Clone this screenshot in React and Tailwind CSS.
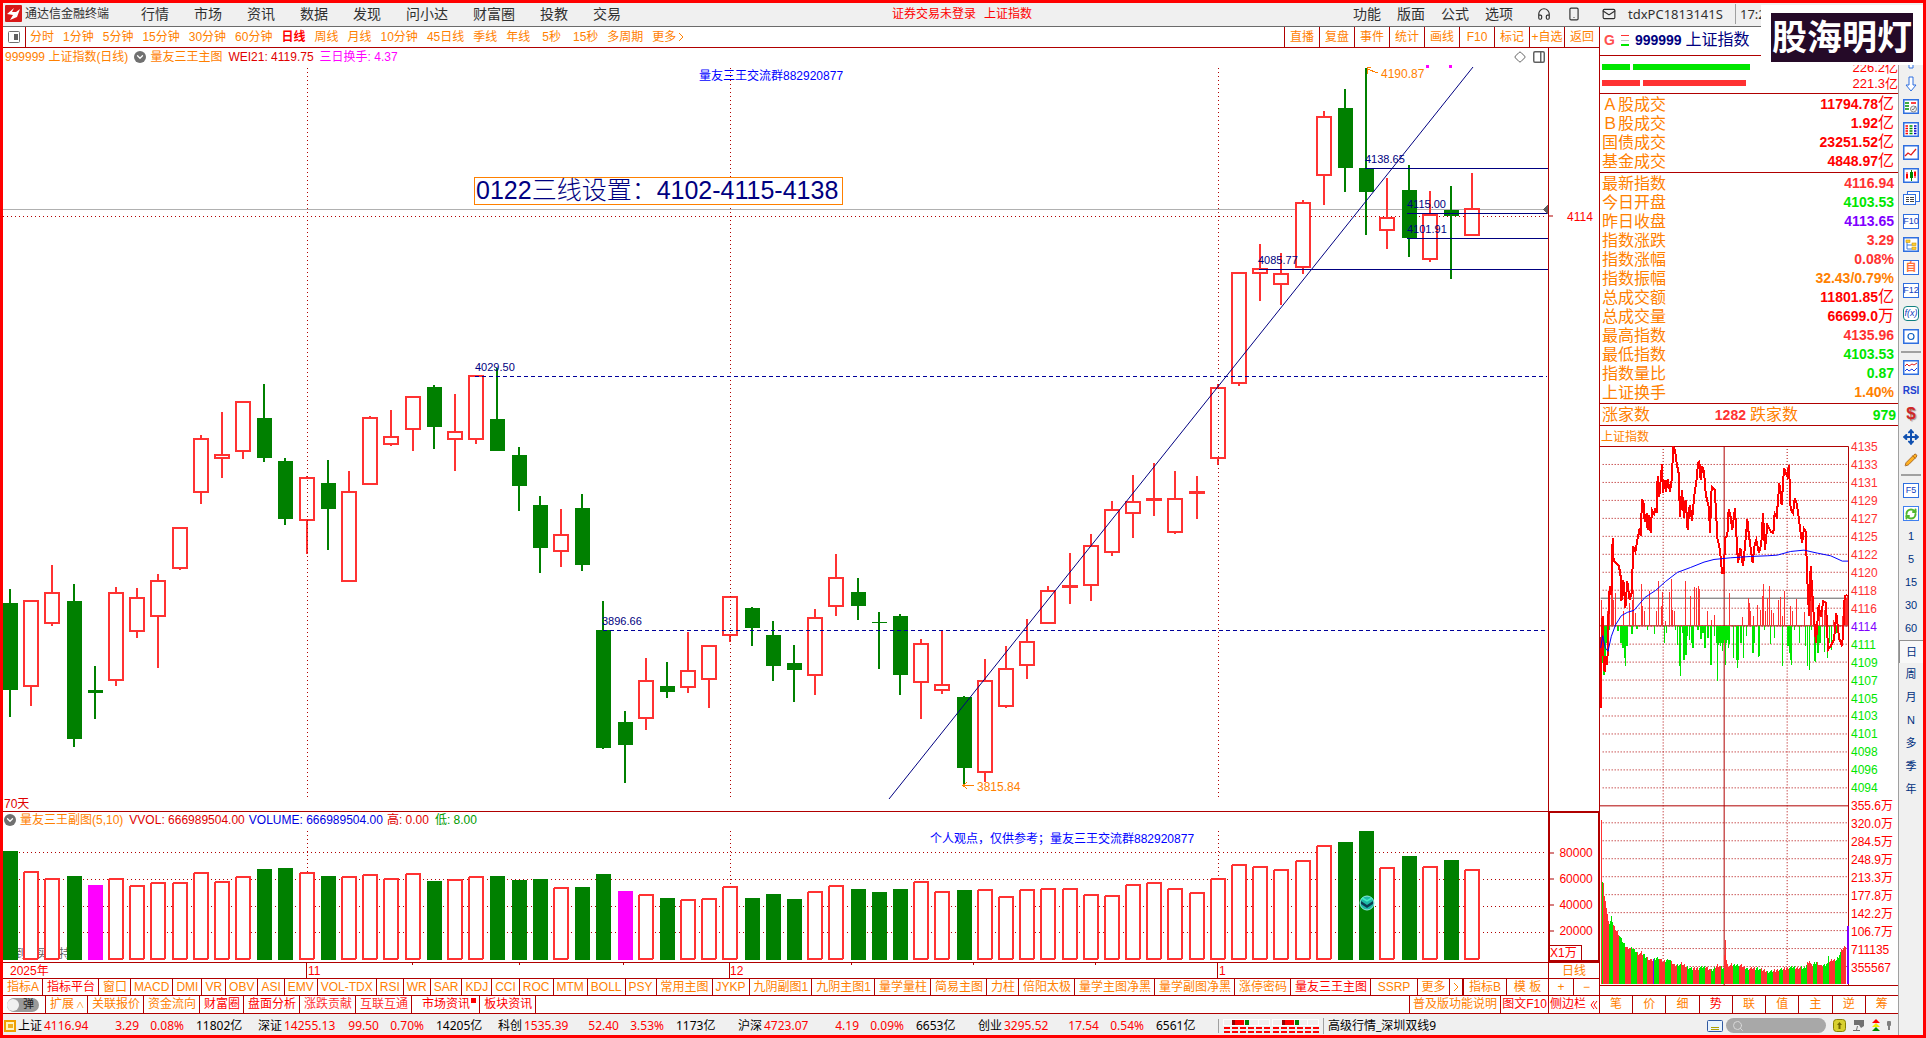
import React from "react";
import { Headphones, Smartphone, Mail, Search, Diamond, PanelRight, ChevronDown, Pencil, Move, RefreshCw } from "lucide-react";

/* kind, body top, body bottom, wick top, wick bottom, volume top, volume kind */
const DAYS = [
  ["g",603,690,589,717,851],["r",600,687,600,706,871],["r",592,624,565,626,878],["g",601,739,584,747,876],["g",690,693,666,719,885,"m"],
  ["r",592,681,587,686,878],["r",597,632,588,638,885],["r",580,617,574,668,882],["r",527,569,527,570,882],["r",438,493,435,504,872],
  ["r",454,459,412,478,881],["r",401,452,401,459,876],["g",418,458,384,462,869],["g",461,519,458,525,868],["r",477,521,476,554,872],
  ["g",483,509,460,550,876],["r",491,582,471,582,876],["r",417,485,416,485,874],["r",436,445,410,446,878],["r",396,430,396,451,873],
  ["g",387,427,385,449,881],["r",431,440,394,471,879],["r",375,440,375,444,876],["g",419,451,368,451,876],["g",455,486,447,511,880],
  ["g",505,548,496,573,879],["r",534,552,509,567,887],["g",508,565,494,571,887],["g",630,748,601,749,874],["g",722,745,711,783,891,"m"],
  ["r",680,719,658,730,894],["g",686,692,662,698,898],["r",670,688,632,693,899],["r",645,680,645,708,898],["r",596,636,596,642,886],
  ["g",608,628,607,646,898],["g",635,666,621,681,894],["g",663,670,645,702,899],["r",617,676,609,695,891],["r",577,607,554,616,885],
  ["g",592,606,578,620,889],["g",622,623,612,669,892],["g",616,675,614,695,889],["r",643,683,639,719,881],["r",684,691,630,694,891],
  ["g",697,768,696,785,890],["r",680,773,659,782,889],["r",668,707,646,708,896],["r",641,666,619,679,889],["r",590,624,586,624,888],
  ["r",585,588,553,604,888],["r",545,586,534,601,894],["r",509,553,501,556,895],["r",501,514,475,538,884],["r",498,501,463,516,882],
  ["r",498,533,471,534,888],["r",491,494,476,519,892],["r",387,459,384,465,878],["r",272,384,272,386,864],["r",268,274,244,301,866],
  ["r",273,285,253,305,869],["r",202,268,200,274,860],["r",116,176,111,205,845],["g",108,168,89,192,842],["g",168,192,68,235,831],
  ["r",217,231,178,249,867],["g",190,238,165,257,856],["r",214,260,191,262,866],["g",210,216,186,279,860],["r",208,236,173,236,869],
];
const cx = (i) => Math.round(10 + 21.19 * i);

const DARK = "#b00000";
const RED = "#ff3232";
const GREEN = "#008000";
const NAVY = "#000080";

function Label({ x, y, box, className = "", children }) {
  const [bx, by, bw, bh] = box;
  return (
    <span
      className={"absolute -translate-y-1/2 whitespace-nowrap leading-none " + className}
      style={{ left: ((x - bx) / bw) * 100 + "%", top: ((y - by) / bh) * 100 + "%" }}
    >
      {children}
    </span>
  );
}

const MAIN = [3, 48, 1545, 763];
const SUB = [3, 812, 1545, 150];

function RoundArrow() {
  return (
    <span className="flex size-3 items-center justify-center rounded-full bg-[#707070]">
      <ChevronDown className="size-2.5 text-white" strokeWidth={3} />
    </span>
  );
}

function MainChart() {
  return (
    <div className="relative min-w-0 flex-1 border-r border-[#b00000]">
      <svg className="absolute inset-0 size-full" viewBox={MAIN.join(" ")} preserveAspectRatio="none" shapeRendering="crispEdges">
        <line x1="3" x2="1545" y1="209.5" y2="209.5" stroke="#b0b0b0" />
        <line x1="3" x2="1547" y1="216.5" y2="216.5" stroke={DARK} strokeDasharray="1 3" />
        {DAYS.map(([k, t, b, wt, wb], i) => {
          const c = cx(i);
          return k === "g" ? (
            <g key={i} fill={GREEN}>
              <rect x={c - 1} y={wt} width="2" height={wb - wt} />
              <rect x={Math.max(3, c - 7)} y={t} width={15} height={b - t} />
            </g>
          ) : (
            <g key={i} fill={RED}>
              <rect x={c - 1} y={wt} width="2" height={t - wt} />
              <rect x={c - 1} y={b} width="2" height={wb - b} />
              <rect x={c - 7} y={t + 1} width="14" height={Math.max(1, b - t - 2)} fill="white" stroke={RED} strokeWidth="2" />
            </g>
          );
        })}
        {[307, 730, 1218].map((x) => (
          <line key={x} x1={x + 0.5} x2={x + 0.5} y1="68" y2="798" stroke={DARK} strokeDasharray="1 3" />
        ))}
        <line x1="475" x2="1547" y1="376.5" y2="376.5" stroke="#00009a" strokeDasharray="4 3" />
        <line x1="603" x2="1547" y1="630.5" y2="630.5" stroke="#00009a" strokeDasharray="4 3" />
        <g stroke={NAVY}>
          <line x1="1365" x2="1548" y1="168.5" y2="168.5" />
          <line x1="1407" x2="1548" y1="213.5" y2="213.5" />
          <line x1="1407" x2="1548" y1="238.5" y2="238.5" />
          <line x1="1259" x2="1548" y1="269.5" y2="269.5" />
          <line x1="889" y1="799" x2="1473" y2="67" shapeRendering="auto" />
        </g>
        <g stroke="#ff8000" fill="none">
          <path d="M1367 69 L1378 73 M1371 67 L1367 68 L1368 74" />
          <path d="M963 785.5 H974 M967 782 L963 785.5 L967 789" />
        </g>
        <rect x="1426" y="65" width="3" height="3" fill="#ff00ff" />
        <rect x="1449" y="65" width="3" height="3" fill="#ff00ff" />
        <path d="M1548 205 L1543 209.5 L1548 214Z" fill="#606060" />
      </svg>
      <div className="absolute left-0.5 top-px flex h-4 items-center gap-1.5 text-xs leading-4 text-[#ff8000]">
        <span>999999 上证指数(日线)</span>
        <span className="flex items-center gap-1"><RoundArrow />量友三王主图</span>
        <span className="text-[#e00000]">WEI21: 4119.75</span>
        <span className="text-[#ff00ff]">三日换手: 4.37</span>
      </div>
      <div className="absolute right-0.5 top-px flex h-4 items-center gap-1.5 text-[#606060]">
        <Diamond className="size-3" strokeWidth={2} />
        <PanelRight className="size-3.5" strokeWidth={2.5} />
      </div>
      <Label box={MAIN} x={699} y={76} className="text-xs text-[#0000ff]">量友三王交流群882920877</Label>
      <Label box={MAIN} x={474} y={191} className="border border-[#ff8000] bg-white pb-px pl-px pr-1 text-[25px] leading-[26px] text-[#000080]">
        0122<span className="font-light">三线设置：</span>4102-4115-4138
      </Label>
      <Label box={MAIN} x={1381} y={74} className="text-xs text-[#ff8000]">4190.87</Label>
      <Label box={MAIN} x={977} y={787} className="text-xs text-[#ff8000]">3815.84</Label>
      {[["4138.65",1365,159],["4115.00",1407,204],["4101.91",1407,229],["4085.77",1258,260],["4029.50",475,367],["3896.66",602,621]].map(([t, x, y]) => (
        <Label key={t} box={MAIN} x={x} y={y} className="text-[11px] text-[#000080]">{t}</Label>
      ))}
      <Label box={MAIN} x={4} y={804} className="text-xs text-[#e00000]">70天</Label>
    </div>
  );
}

function VolumeChart() {
  return (
    <div className="relative min-w-0 flex-1">
      <svg className="absolute inset-0 size-full" viewBox={SUB.join(" ")} preserveAspectRatio="none" shapeRendering="crispEdges">
        {[852, 879, 906, 932].map((y) => (
          <line key={y} x1="3" x2="1546" y1={y + 0.5} y2={y + 0.5} stroke={DARK} strokeDasharray="1 3" />
        ))}
        {[307, 730, 1218].map((x) => (
          <line key={x} x1={x + 0.5} x2={x + 0.5} y1="831" y2="960" stroke={DARK} strokeDasharray="1 3" />
        ))}
        <g fill="#606060" fontSize="12" shapeRendering="auto">
          <text x="14" y="958">到</text>
          <text x="36" y="958">买</text>
          <text x="59" y="958">持</text>
        </g>
        {DAYS.map(([k, , , , , v, vk], i) => {
          const c = cx(i);
          return k === "g" ? (
            <rect key={i} x={Math.max(3, c - 7)} y={v} width="15" height={960 - v} fill={vk ? "#ff00ff" : GREEN} />
          ) : (
            <rect key={i} x={c - 7} y={v + 1} width="14" height={958 - v} rx="1" fill="white" stroke={RED} strokeWidth="2" />
          );
        })}
        <g shapeRendering="auto">
          <circle cx="1367" cy="903" r="7" fill="#1fb9a8" stroke="#8ee8e0" />
          <path d="M1362 898 L1367 901 L1372 898" fill="none" stroke="#40f0c0" strokeWidth="1.5" />
          <path d="M1361 901 L1367 905 L1373 901 V904 L1367 908 L1361 904Z" fill="#0a3c50" />
        </g>
      </svg>
      <div className="absolute left-px top-0 flex h-4 items-center gap-1 text-xs leading-4">
        <RoundArrow />
        <span className="text-[#ff8000]">量友三王副图(5,10)</span>
        <span className="pl-0.5 text-[#e00000]">VVOL: 666989504.00</span>
        <span className="text-[#0000e0]">VOLUME: 666989504.00</span>
        <span className="text-[#e00000]">高: 0.00</span>
        <span className="pl-0.5 text-[#009a00]">低: 8.00</span>
      </div>
      <Label box={SUB} x={930} y={839} className="text-xs text-[#0000ff]">个人观点，仅供参考；量友三王交流群882920877</Label>
    </div>
  );
}

function VolumeAxis() {
  const box = [1548, 811, 51, 151];
  return (
    <div className="relative w-[51px] border-2 border-r border-[#b00000] text-xs text-[#ff0000]">
      {[852, 879, 906, 932].map((y, i) => (
        <React.Fragment key={y}>
          <Label box={box} x={1548} y={y} className="h-px w-1 bg-[#b00000]" />
          <Label box={box} x={1558} y={y}>{["80000", "60000", "40000", "20000"][i]}</Label>
        </React.Fragment>
      ))}
      <span className="absolute bottom-0 left-0 h-[15px] border-r border-t border-[#b00000] pr-1 leading-[14px]">X1万</span>
    </div>
  );
}

const PERIODS = ["分时","1分钟","5分钟","15分钟","30分钟","60分钟","日线","周线","月线","10分钟","45日线","季线","年线","5秒","15秒","多周期"];

function Toolbar() {
  return (
    <div className="flex h-[21px] shrink-0 items-stretch border-b border-[#b00000] text-xs leading-5 text-[#ff8000]">
      <button aria-label="布局" className="flex w-[23px] items-center justify-center border-r border-[#b00000] text-[#606060]">
        <svg width="12" height="12"><rect x=".5" y=".5" width="11" height="11" rx="1" fill="white" stroke="#707070" /><rect x="6" y="3" width="4" height="6" fill="#606060" /></svg>
      </button>
      <div className="flex items-center gap-[9px] pl-1 pr-2">
        {PERIODS.map((p) => (
          <button key={p} className={p === "日线" ? "font-bold text-[#ff0000]" : p.endsWith("秒") ? "pl-[3px]" : ""}>{p}</button>
        ))}
        <button className="flex items-center gap-0.5">
          更多
          <svg width="6" height="10" fill="none" stroke="currentColor"><path d="M1 1 L5 5 L1 9" /></svg>
        </button>
      </div>
      <div className="ml-auto flex">
        {["直播","复盘","事件","统计","画线","F10","标记","+自选","返回"].map((t) => (
          <button key={t} className="w-[35px] whitespace-nowrap border-l border-[#b00000] text-center">{t}</button>
        ))}
      </div>
    </div>
  );
}

const TABS1 = ["指标A","指标平台","窗口","MACD","DMI","VR","OBV","ASI","EMV","VOL-TDX","RSI","WR","SAR","KDJ","CCI","ROC","MTM","BOLL","PSY","常用主图","JYKP","九阴副图1","九阴主图1","量学量柱","简易主图","力柱","倍阳太极","量学主图净黑","量学副图净黑","涨停密码","量友三王主图","SSRP"];
const TABS2 = [["扩展"],["关联报价"],["资金流向"],["财富圈","e"],["盘面分析","e"],["涨跌贡献","l"],["互联互通","l"],["市场资讯","e"],["板块资讯","e"]];

function BottomTabs() {
  const cell = "whitespace-nowrap border-r border-[#b00000] ";
  return (
    <div className="shrink-0 text-xs leading-4 text-[#ff8000]">
      <div className="flex h-[17px] items-stretch border-t border-[#b00000]">
        <div className="flex min-w-0 flex-1 overflow-hidden">
          {TABS1.map((t) => (
            <button
              key={t}
              className={
                cell + "last:grow last:border-r-0 " + (/^[A-Z-]+$/.test(t) ? "px-[3px] " : "pl-1 pr-[3px] ") +
                (t === "指标平台" || t === "量友三王主图" ? "text-[#ff0000]" : "")
              }
            >
              {t}
            </button>
          ))}
        </div>
        <div className="flex">
          <button className="w-8 border-l border-[#b00000]">更多</button>
          <button aria-label="下一页" className="flex w-[15px] items-center justify-center border-l border-r-2 border-[#b00000]">
            <svg width="6" height="10" fill="none" stroke="currentColor"><path d="M1 1 L5 5 L1 9" /></svg>
          </button>
          <button className="w-[42px]">指标B</button>
          <button className="w-[42px] border-l border-[#b00000]">模 板</button>
          <button className="w-[25px] border-l border-[#b00000]">+</button>
          <button className="w-[26px] border-l border-[#b00000]">−</button>
        </div>
      </div>
      <div className="flex h-[19px] items-stretch border-y border-[#b00000] leading-[17px]">
        <label className="flex w-[43px] items-center border-r border-[#b00000] pl-1">
          <input type="checkbox" className="sr-only" aria-label="弹" />
          <span className="flex h-3.5 w-8 items-center rounded-full bg-[#9a9a9a]">
            <span className="size-3 rounded-full bg-[#f0f0f0]" />
            <span className="pl-1 text-[11px] text-[#202020]">弹</span>
          </span>
        </label>
        {TABS2.map(([t, c]) => (
          <button key={t} className={cell + "pl-1 pr-[3px] " + (c === "e" ? "text-[#ff0000]" : c === "l" ? "text-[#ff3232]" : "")}>
            {t === "扩展" ? (
              <span className="flex items-center">扩展<svg className="ml-0.5" width="8" height="8" fill="none" stroke="currentColor" opacity=".6"><path d="M1 7 L4 1 L7 7" /></svg></span>
            ) : t === "市场资讯" ? (
              <span className="relative inline-block px-1.5">{t}<i className="absolute right-0 top-0.5 size-[5px] bg-[#ff0000]" /></span>
            ) : t}
          </button>
        ))}
        <div className="ml-auto flex whitespace-nowrap">
          <button className="w-[91px] border-l border-[#b00000]">普及版功能说明</button>
          <button className="w-12 border-l border-[#b00000] text-[#ff0000]">图文F10</button>
          <button className="flex w-[51px] items-center gap-1 border-l border-[#b00000] pl-px text-[#ff0000]">
            侧边栏
            <svg width="8" height="10" fill="none" stroke="currentColor"><path d="M4 1 L1 5 L4 9 M7 1 L4 5 L7 9" /></svg>
          </button>
        </div>
      </div>
    </div>
  );
}

function DateAxis() {
  const box = [3, 962, 1545, 16];
  return (
    <div className="flex h-4 shrink-0 border-t border-[#b00000] text-xs text-[#ff0000]">
      <div className="relative flex-1">
        {[306, 729, 1217].map((x) => <Label key={x} box={box} x={x} y={970} className="h-4 w-px bg-[#b00000]" />)}
        {[412, 519, 623, 851, 973, 1095].map((x) => <Label key={x} box={box} x={x} y={963} className="h-0.5 w-px bg-[#b00000]" />)}
        <Label box={box} x={10} y={971}>2025年</Label>
        <Label box={box} x={308} y={971}>11</Label>
        <Label box={box} x={730} y={971}>12</Label>
        <Label box={box} x={1219} y={971}>1</Label>
      </div>
      <div className="w-[51px] border-l border-[#b00000] text-center leading-4 text-[#ff8000]">日线</div>
    </div>
  );
}

/* Intraday panel geometry, three units to the pixel */
const MINI = [28, 48, 747, 1620];
const PRICE = "30,835 31,700 33,600 36,560 39,700 42,727 46,680 50,705 52,610 55,500 58,470 61,495 63,480 64,400 66,325 69,395 78,400 85,410 90,440 92,515 98,450 104,535 110,455 117,510 123,490 128,350 134,365 140,330 147,295 150,318 154,210 158,212 162,275 168,250 171,300 176,255 180,310 184,240 190,252 194,235 198,250 201,137 206,200 214,103 217,190 222,150 226,185 231,148 238,185 243,150 248,50 253,60 258,100 264,130 268,260 274,180 280,265 285,210 291,300 297,225 304,272 311,195 317,155 322,100 326,95 330,150 335,110 340,125 345,190 350,215 355,235 358,310 363,170 372,180 376,240 380,325 388,360 394,430 400,430 403,325 410,318 414,238 420,262 425,300 433,235 438,330 442,400 449,355 457,408 463,350 470,268 474,310 486,400 492,345 497,330 505,370 512,340 517,250 523,360 530,285 540,305 548,310 552,250 558,262 566,160 573,225 580,115 590,140 595,105 600,240 607,250 612,205 618,220 625,270 634,340 640,297 645,305 650,450 655,560 660,410 668,540 676,640 684,525 690,560 698,515 706,520 712,660 720,650 730,630 737,550 745,625 754,650 758,600 762,500 770,495";
const AVG = "30,655 36,618 44,655 52,665 62,620 75,585 92,558 110,548 130,542 163,503 195,482 225,455 260,428 300,413 340,397 370,389 420,384 480,380 530,378 560,376 600,365 640,361 680,370 720,378 755,394 772,394";
const UPS = [[31,512],[49,545],[55,500],[60,460],[64,380],[68,510],[73,490],[98,545],[115,520],[124,510],[128,480],[133,550],[151,462],[154,530],[159,545],[175,484],[196,545],[202,453],[211,530],[214,488],[223,575],[236,486],[241,448],[244,540],[249,545],[283,453],[298,500],[311,472],[317,475],[323,470],[326,478],[349,545],[361,570],[370,555],[415,490],[454,562],[472,505],[475,520],[478,545],[487,560],[500,525],[508,540],[514,500],[517,462],[523,545],[529,505],[535,468],[541,540],[547,550],[562,510],[568,502],[574,560],[580,483],[598,530],[604,545],[616,508],[640,548],[658,470],[661,430],[680,550],[686,520],[695,525],[700,540],[704,515],[727,570],[754,560],[758,530],[762,500],[766,505],[770,495]];
const DOWNS = [[34,700],[38,735],[41,705],[44,640],[54,600],[80,605],[89,640],[95,655],[100,685],[103,708],[107,650],[122,612],[137,598],[169,600],[190,612],[220,640],[226,610],[253,600],[259,645],[265,710],[268,738],[274,610],[278,690],[284,675],[289,620],[295,630],[300,640],[305,655],[320,600],[329,628],[335,610],[341,655],[350,625],[359,705],[370,620],[376,640],[379,755],[382,645],[385,640],[388,650],[391,640],[394,665],[397,640],[400,630],[403,705],[406,640],[409,630],[412,655],[415,642],[427,685],[436,690],[439,716],[442,690],[449,640],[457,686],[466,620],[485,670],[490,640],[502,683],[505,680],[520,600],[538,642],[550,625],[574,708],[590,650],[595,670],[598,690],[601,705],[610,600],[625,640],[643,650],[649,708],[655,720],[661,600],[670,695],[673,697],[680,670],[686,640],[700,668],[709,685],[715,640],[721,660],[737,610]];
const ENV = [[30,93],[33,278],[36,282],[39,320],[44,345],[48,374],[55,402],[60,380],[65,400],[72,416],[80,428],[90,448],[104,470],[125,474],[140,490],[150,487],[165,500],[180,510],[200,500],[215,515],[231,505],[250,525],[270,520],[300,535],[345,530],[362,540],[378,522],[398,535],[401,424],[404,508],[408,524],[440,522],[470,535],[500,533],[530,544],[570,536],[600,530],[640,532],[653,508],[660,525],[675,515],[690,528],[708,520],[711,492],[714,512],[735,508],[750,480],[763,465]];

function envAt(x) {
  for (let i = 1; i < ENV.length; i++) {
    const [x0, y0] = ENV[i - 1];
    const [x1, y1] = ENV[i];
    if (x <= x1) return y0 + ((y1 - y0) * (x - x0)) / (x1 - x0);
  }
  return ENV[ENV.length - 1][1];
}
const MINI_VOL = Array.from({ length: 245 }, (_, i) => {
  const x = 30 + i * 3;
  const h = (Math.floor(i / 2) * 7919) % 17;
  const c = x === 186 ? "#8000ff" : x === 30 || Math.abs(x - 402) < 5 ? RED : h < 8 ? "#00e600" : RED;
  return { x, y: envAt(x) + (i > 4 && Math.abs(x - 402) > 4 ? (i * 37) % 10 : 0), c };
});

function MiniChart() {
  return (
    <div className="flex min-h-0 flex-1 pb-[9px]">
      <div className="relative flex flex-1 border-b border-[#b00000]">
        <svg className="absolute inset-y-0 left-0 h-full w-[249px]" viewBox={MINI.join(" ")} preserveAspectRatio="none" shapeRendering="crispEdges">
          <g stroke={DARK} strokeWidth="3" fill="none">
            {Array.from({ length: 19 }, (_, i) => 103.5 + i * 54).map((y) => <line key={y} x1="36" x2="772" y1={y} y2={y} strokeDasharray="3 6" />)}
            {Array.from({ length: 9 }, (_, i) => 1180.5 + i * 54).map((y) => <line key={y} x1="36" x2="772" y1={y} y2={y} strokeDasharray="3 6" />)}
            <line x1="217.5" x2="217.5" y1="48" y2="1666" strokeDasharray="3 6" />
            <line x1="589.5" x2="589.5" y1="48" y2="1666" strokeDasharray="3 6" />
            <path d="M28 49.5 H773.5 V1668 M400.5 48 V1668 M28 1129.5 H773 M28 588.5 H773" />
          </g>
          <line x1="30" x2="772" y1="505.5" y2="505.5" stroke="#606060" strokeWidth="3" />
          {UPS.map(([x, y]) => <rect key={x} x={x} y={y} width="3" height={585 - y} fill={RED} />)}
          {DOWNS.map(([x, y]) => <rect key={x} x={x} y="588" width="4" height={y - 588} fill="#00e600" />)}
          <polyline points={PRICE} fill="none" stroke="#ff0000" strokeWidth="6" />
          <polyline points={AVG} fill="none" stroke="#0000ff" strokeWidth="3" />
          {MINI_VOL.map((v) => <rect key={v.x} x={v.x} y={v.y + 1080} width="3" height={586 - v.y} fill={v.c} />)}
          <rect x="768" y="1491" width="6" height="175" fill="#8000ff" />
        </svg>
        <div className="relative ml-[251px] flex-1 text-xs">
          {[4135,4133,4131,4129,4127,4125,4122,4120,4118,4116,4114,4111,4109,4107,4105,4103,4101,4098,4096,4094].map((t, i) => (
            <Label key={t} box={[0, 446, 100, 540]} x={0} y={447 + i * 18} className={i < 10 ? "text-[#ff3232]" : i === 10 ? "text-[#8000ff]" : "text-[#00e600]"}>{t}</Label>
          ))}
          {["355.6万","320.0万","284.5万","248.9万","213.3万","177.8万","142.2万","106.7万","711135","355567"].map((t, i) => (
            <Label key={t} box={[0, 446, 100, 540]} x={0} y={807 + i * 18} className="text-[#ff0000]">{t}</Label>
          ))}
        </div>
      </div>
    </div>
  );
}

const TURNOVER = [["Ａ股成交","11794.78","亿"],["Ｂ股成交","1.92","亿"],["国债成交","23251.52","亿"],["基金成交","4848.97","亿"]].map((r) => [...r, "text-[#ff0000]"]);
const QUOTES = [
  ["最新指数","4116.94","","text-[#ff3232]"],["今日开盘","4103.53","","text-[#00e600]"],["昨日收盘","4113.65","","text-[#8000ff]"],
  ["指数涨跌","3.29","","text-[#ff3232]"],["指数涨幅","0.08%","","text-[#ff3232]"],["指数振幅","32.43/0.79%","","text-[#ff8000]"],
  ["总成交额","11801.85","亿","text-[#ff0000]"],["总成交量","66699.0","万","text-[#ff0000]"],["最高指数","4135.96","","text-[#ff3232]"],
  ["最低指数","4103.53","","text-[#00e600]"],["指数量比","0.87","","text-[#00e600]"],["上证换手","1.40%","","text-[#ff8000]"],
];

function QuoteTable({ rows }) {
  return (
    <div className="border-b border-[#b00000] pb-0.5">
      <table className="w-full border-collapse">
        <tbody>
          {rows.map(([l, v, u, c]) => (
            <tr key={l} className="h-[19px]">
              <th scope="row" className="p-0 pl-0.5 pt-0.5 text-left text-base font-normal leading-4 text-[#ff8000]">{l}</th>
              <td className={"p-0 pr-1 text-sm font-bold leading-4 " + c}>
                <span className="flex h-4 items-center justify-end">
                  {v}{u && <span className="text-base font-normal leading-4">{u}</span>}
                </span>
              </td>
            </tr>
          ))}
        </tbody>
      </table>
    </div>
  );
}

function QuotePanel() {
  return (
    <aside className="flex w-[299px] shrink-0 flex-col border-l border-[#b00000]">
      <div className="flex h-[29px] items-center border-b border-[#b00000] pb-0.5 pl-1 text-[#000080]">
        <span className="text-sm font-bold text-[#ff5050]">G</span>
        <svg className="ml-1.5" width="8" height="12"><path d="M0 1.5H8" stroke="#ff3232" /><path d="M0 6.5H8" stroke="#c0c0c0" /><path d="M0 11H8" stroke="#00e600" strokeWidth="2" /></svg>
        <b className="ml-1.5 text-sm">999999</b>
        <span className="ml-1 text-base">上证指数</span>
      </div>
      <div className="flex h-[38px] flex-col border-b border-[#b00000] pl-0.5 pt-[3px] text-[13px] leading-[15px] text-[#ff0000]">
        <div className="flex h-4 items-center gap-[3px]"><i className="h-1.5 w-7 bg-[#00e600]" /><i className="h-1.5 w-[117px] bg-[#00e600]" /><span className="ml-auto">226.2亿</span></div>
        <div className="flex h-4 items-center gap-[3px]"><i className="h-1.5 w-[38px] bg-[#ff3232]" /><i className="h-1.5 w-[103px] bg-[#ff3232]" /><span className="ml-auto">221.3亿</span></div>
      </div>
      <QuoteTable rows={TURNOVER} />
      <QuoteTable rows={QUOTES} />
      <div className="flex h-[22px] items-center border-b border-[#b00000] px-0.5 text-sm font-bold text-[#ff8000]">
        <span className="text-base font-normal">涨家数</span>
        <span className="ml-auto text-[#ff3232]">1282</span>
        <span className="ml-1 text-base font-normal">跌家数</span>
        <span className="w-[98px] text-right text-[#00e600]">979</span>
      </div>
      <div className="h-5 pl-px text-xs leading-[22px] text-[#ff8000]">上证指数</div>
      <MiniChart />
      <div className="flex h-[19px] shrink-0 border-y border-[#b00000] text-xs leading-[17px] text-[#ff8000]">
        {["笔","价","细","势","联","值","主","逆","筹"].map((t) => (
          <button key={t} className={"flex-1 border-r border-[#b00000] last:border-r-0 " + (t === "势" ? "text-[#ff0000]" : "")}>{t}</button>
        ))}
      </div>
    </aside>
  );
}

function Boxed({ children, stroke = "#2f6fe0" }) {
  return <svg width="16" height="15" fill="none"><rect x=".75" y=".75" width="14.5" height="13.5" stroke={stroke} strokeWidth="1.5" fill="white" />{children}</svg>;
}
function BoxedText({ children, className = "text-[9px] text-[#1040c0]" }) {
  return <span className={"flex h-[15px] w-4 items-center justify-center border border-[#2f6fe0] bg-white leading-none " + className}>{children}</span>;
}
const SIDE = [
  ["上移", <svg width="12" height="16" fill="#fff" stroke="#2f6fe0"><path d="M6 1 L11 7 H8 V15 H4 V7 H1Z" /></svg>],
  ["下移", <svg width="12" height="16" fill="#fff" stroke="#2f6fe0"><path d="M6 15 L11 9 H8 V1 H4 V9 H1Z" /></svg>],
  ["行情检查", <Boxed><path d="M2 4H6M2 7H6M2 10H6" stroke="#009000" strokeWidth="1.5" /><path d="M8 4H13" stroke="#f00" strokeWidth="1.5" /><circle cx="10.5" cy="10" r="3" stroke="#888" fill="#eee" /><path d="M9 10L10 11L13 7" stroke="#777" /></Boxed>],
  ["行情列表", <Boxed><g strokeWidth="1.5"><path d="M2.500 4H5M2.500 6.500H5M2.500 9H5M2.500 11.500H5" stroke="#f00" /><path d="M6.500 4H9.500M6.500 6.500H9.500M6.500 9H9.500M6.500 11.500H9.500" stroke="#009000" /><path d="M11 4H13.500M11 6.500H13.500M11 9H13.500M11 11.500H13.500" stroke="#00c" /></g></Boxed>],
  ["分时图", <Boxed><path d="M2 11L5 8L8 10L13 4" stroke="#e02020" strokeWidth="1.3" /></Boxed>],
  ["K线图", <Boxed><path d="M4 4V11M12 3V10" stroke="#f00" /><rect x="3" y="6" width="2" height="4" fill="#f00" /><rect x="7" y="4" width="3" height="6" fill="#080" /><path d="M8.500 2V13" stroke="#080" /><rect x="11" y="4" width="2" height="4" fill="#f00" /></Boxed>],
  ["多窗口", <svg width="17" height="15" fill="#fff" stroke="#2f6fe0"><rect x="4.500" y=".5" width="12" height="10" /><rect x=".5" y="3.500" width="12" height="10" /><path d="M3 6.500H6M7 6.500H11M3 8.500H6M7 8.500H11M3 10.500H6M7 10.500H11" stroke="#444" /></svg>],
  ["F10", <BoxedText>F10</BoxedText>],
  ["结构", <Boxed><path d="M4 5V12H9M4 8H9" stroke="#4080e0" /><rect x="3" y="3" width="4" height="2.500" fill="#fc3" stroke="#c90" strokeWidth=".6" /><rect x="9" y="6" width="4" height="2.500" fill="#fc3" stroke="#c90" strokeWidth=".6" /><rect x="9" y="10" width="4" height="2.500" fill="#fc3" stroke="#c90" strokeWidth=".6" /></Boxed>],
  ["自选", <BoxedText className="text-[11px] font-bold text-[#ff7038]">自</BoxedText>],
  ["F12", <BoxedText>F12</BoxedText>],
  ["公式", <span className="flex h-[15px] w-4 items-center justify-center rounded border border-[#108080] bg-white text-[9px] italic leading-none text-[#1040c0]">f(x)</span>],
  ["圆", <Boxed><circle cx="8" cy="7.500" r="3" stroke="#1060c0" strokeWidth="1.200" /></Boxed>],
  null,
  ["波动", <Boxed><path d="M2 6L4 4L6 6L9 4L11 5L14 3" stroke="#e02020" /><path d="M2 11L4 9L6 11L9 9L11 11L14 8" stroke="#2040e0" /></Boxed>],
  ["RSI", <b className="text-[10px] leading-none text-[#2040d0]">RSI</b>],
  ["资金", <b className="text-[17px] leading-none text-[#d02828] [text-shadow:1px_1px_1px_#999]">$</b>],
  ["移动", <Move className="size-4 text-[#1050b0]" strokeWidth={3} />],
  ["画线", <Pencil className="size-3.5 fill-[#ffb020] text-[#a06020]" strokeWidth={1.5} />],
  null,
  ["F5", <BoxedText>F5</BoxedText>],
  ["刷新", <span className="flex h-[15px] w-4 items-center justify-center border border-[#4080f0] bg-white"><RefreshCw className="size-3 text-[#50b830]" strokeWidth={4} /></span>],
  ...["1","5","15","30","60","日","周","月","N","多","季","年"].map((t) => [t, t]),
];

function SideBar() {
  return (
    <nav className="flex w-[25px] shrink-0 flex-col border-l border-[#a0a0a0] bg-[#f0f0f0] pt-[22px] text-[#003080]">
      {SIDE.map((s, i) =>
        s === null ? (
          <hr key={i} className="mx-0.5 my-[3px] border-t-2 border-[#a0a0a0]" />
        ) : (
          <button key={i} aria-label={s[0]} className={"flex h-[23px] shrink-0 items-center justify-center text-[11px] leading-none " + (s[0] === "日" ? "border-l border-t border-[#909090] bg-[#f8f8f8]" : "")}>{s[1]}</button>
        )
      )}
    </nav>
  );
}

function Header() {
  return (
    <header className="flex h-6 shrink-0 items-center border-b border-[#6b6b6b] bg-[#f0f0f0] pb-0.5 text-sm leading-5 text-[#303030]">
      <svg className="ml-0.5 shrink-0" width="17" height="17" viewBox="0 0 17 17"><rect width="17" height="17" rx="1" fill="#d81818" /><path d="M2 9 L9 3 L7 7 L11 7 L15 4 L12 12 L5 15 L8 10Z" fill="white" /></svg>
      <span className="ml-[3px] text-xs">通达信金融终端</span>
      <nav className="ml-8 flex gap-[25px]">
        {["行情","市场","资讯","数据","发现","问小达","财富圈","投教","交易"].map((t) => <button key={t}>{t}</button>)}
      </nav>
      <div className="flex flex-1 justify-center gap-2 pr-[50px] text-xs text-[#ff0000]"><span>证券交易未登录</span><span>上证指数</span></div>
      <nav className="flex gap-4">
        {["功能","版面","公式","选项"].map((t) => <button key={t}>{t}</button>)}
      </nav>
      <Headphones className="ml-6 size-3.5" strokeWidth={2} />
      <Smartphone className="ml-4 size-3.5" strokeWidth={2} />
      <Mail className="ml-[21px] size-3.5" strokeWidth={2} />
      <span className="ml-3 w-[107px] text-[13px] [font-family:'Noto_Sans',sans-serif]">tdxPC1813141S</span>
      <span className="w-[188px] border-l border-[#a0a0a0] pl-1 text-[13px] [font-family:'Noto_Sans',sans-serif]">17:2</span>
    </header>
  );
}

const INDICES = [
  ["上证","4116.94","3.29","0.08%","11802亿"],["深证","14255.13","99.50","0.70%","14205亿"],["科创","1535.39","52.40","3.53%","1173亿"],
  ["沪深","4723.07","4.19","0.09%","6653亿"],["创业","3295.52","17.54","0.54%","6561亿"],
];

function Meter({ a, b }) {
  return (
    <svg width="47" height="14" shapeRendering="crispEdges">
      <path d="M0 .5H47M0 6.500H47M.5 0V7M13.500 0V7M35.500 0V7M46.500 0V7" stroke="white" />
      <rect x={a} y="1" width="3" height="5" fill="#900000" /><rect x={a + 3} y="1" width={b} height="5" fill="#f00" /><rect x={a + 4 + b} y="1" width="4" height="5" fill={GREEN} />
      <path d="M1 9H47M1 12.500H47" stroke="#f00" strokeWidth="2" strokeDasharray="6 2" />
    </svg>
  );
}

function StatusBar() {
  return (
    <footer className="flex h-[21px] shrink-0 items-center bg-[#f0f0f0] pt-0.5 text-xs leading-4 text-black [font-family:'Noto_Sans','Noto_Sans_CJK_SC',sans-serif]">
      <svg className="ml-px mr-0.5 shrink-0" width="12" height="12"><rect x="1" y="1" width="10" height="10" fill="#fff4c0" stroke="#f0a000" strokeWidth="2" /><rect x="4" y="4" width="5" height="4" fill="#f0b020" /></svg>
      {INDICES.map(([n, v, d, p, a]) => (
        <div key={n} className="grid w-60 shrink-0 grid-cols-[26px_54px_41px_45px_1fr] text-[#ff0000]">
          <span className="text-black">{n}</span><span>{v}</span><span className="text-right">{d}</span><span className="text-right">{p}</span><span className="pl-3 text-black">{a}</span>
        </div>
      ))}
      <div className="flex items-center gap-0.5 border-l border-[#a0a0a0] px-1"><Meter a={9} b={9} /><Meter a={10} b={9} /></div>
      <span className="border-l border-[#a0a0a0] pl-1">高级行情_深圳双线9</span>
      <div className="ml-auto flex items-center gap-[7px] pr-[7px]">
        <svg width="16" height="12"><rect x=".5" y=".5" width="15" height="11" rx="1" fill="#e8f4ff" stroke="#3058a0" /><path d="M4 7.500H12M4 9.500H12" stroke="#b0a000" /></svg>
        <label className="-ml-1 flex h-[15px] w-[100px] items-center rounded-full bg-[#a8a8a8] pl-1.5">
          <Search className="size-3 shrink-0 text-[#d8d8d8]" strokeWidth={2} />
          <input type="search" aria-label="搜索" className="w-full min-w-0 bg-transparent outline-none" />
        </label>
        <svg width="13" height="13"><rect x=".5" y=".5" width="12" height="12" rx="3" fill="#d8d030" stroke="#888000" /><path d="M6.500 3L9 6H4Z M5.500 6H7.500V10H5.500Z" fill="#706800" /></svg>
        <svg width="12" height="13" fill="#707070"><path d="M1 1H11V7L8 9L6 6L1 6Z" /><path d="M5 7L4 11H7V12H0V11H3L4 7Z" /></svg>
        <svg width="8" height="13"><path d="M4 0L8 4H0Z" fill="#f00" /><path d="M4 4L8 8H0Z" fill="#f0f000" /><path d="M4 8L8 12H0Z" fill="#080" /></svg>
        <svg width="4" height="10" fill="#808080"><rect width="4" height="5" rx="1" /><rect x="1" y="5" width="2" height="4" /></svg>
      </div>
    </footer>
  );
}

export default function App() {
  return (
    <div className="relative flex h-screen min-h-[900px] flex-col overflow-hidden border-[3px] border-[#ff0000] bg-white text-black [font-family:'Liberation_Sans','Noto_Sans_CJK_SC',sans-serif]">
      <Header />
      <div className="flex min-h-0 flex-1">
        <div className="flex min-w-0 flex-1 flex-col">
          <div className="flex min-h-0 flex-1">
            <main className="flex min-w-0 flex-1 flex-col">
              <Toolbar />
              <div className="flex min-h-0 flex-[763]">
                <MainChart />
                <div className="relative w-[50px] text-xs text-[#ff0000]">
                  <Label box={[0, 48, 50, 763]} x={0} y={216} className="h-px w-1 bg-[#b00000]" />
                  <Label box={[0, 48, 50, 763]} x={18} y={217}>4114</Label>
                </div>
              </div>
              <div className="flex min-h-0 flex-[151]">
                <div className="flex min-w-0 flex-1 border-t border-[#b00000]"><VolumeChart /></div>
                <VolumeAxis />
              </div>
              <DateAxis />
              <BottomTabs />
            </main>
            <QuotePanel />
          </div>
          <StatusBar />
        </div>
        <SideBar />
      </div>
      <div className="absolute right-0 top-0.5 flex h-[60px] w-[162px] items-center justify-center bg-white pt-1">
        <div className="flex h-[49px] w-[142px] items-center justify-center bg-[#250a28] text-[35px] font-bold leading-none text-white">股海明灯</div>
      </div>
    </div>
  );
}
